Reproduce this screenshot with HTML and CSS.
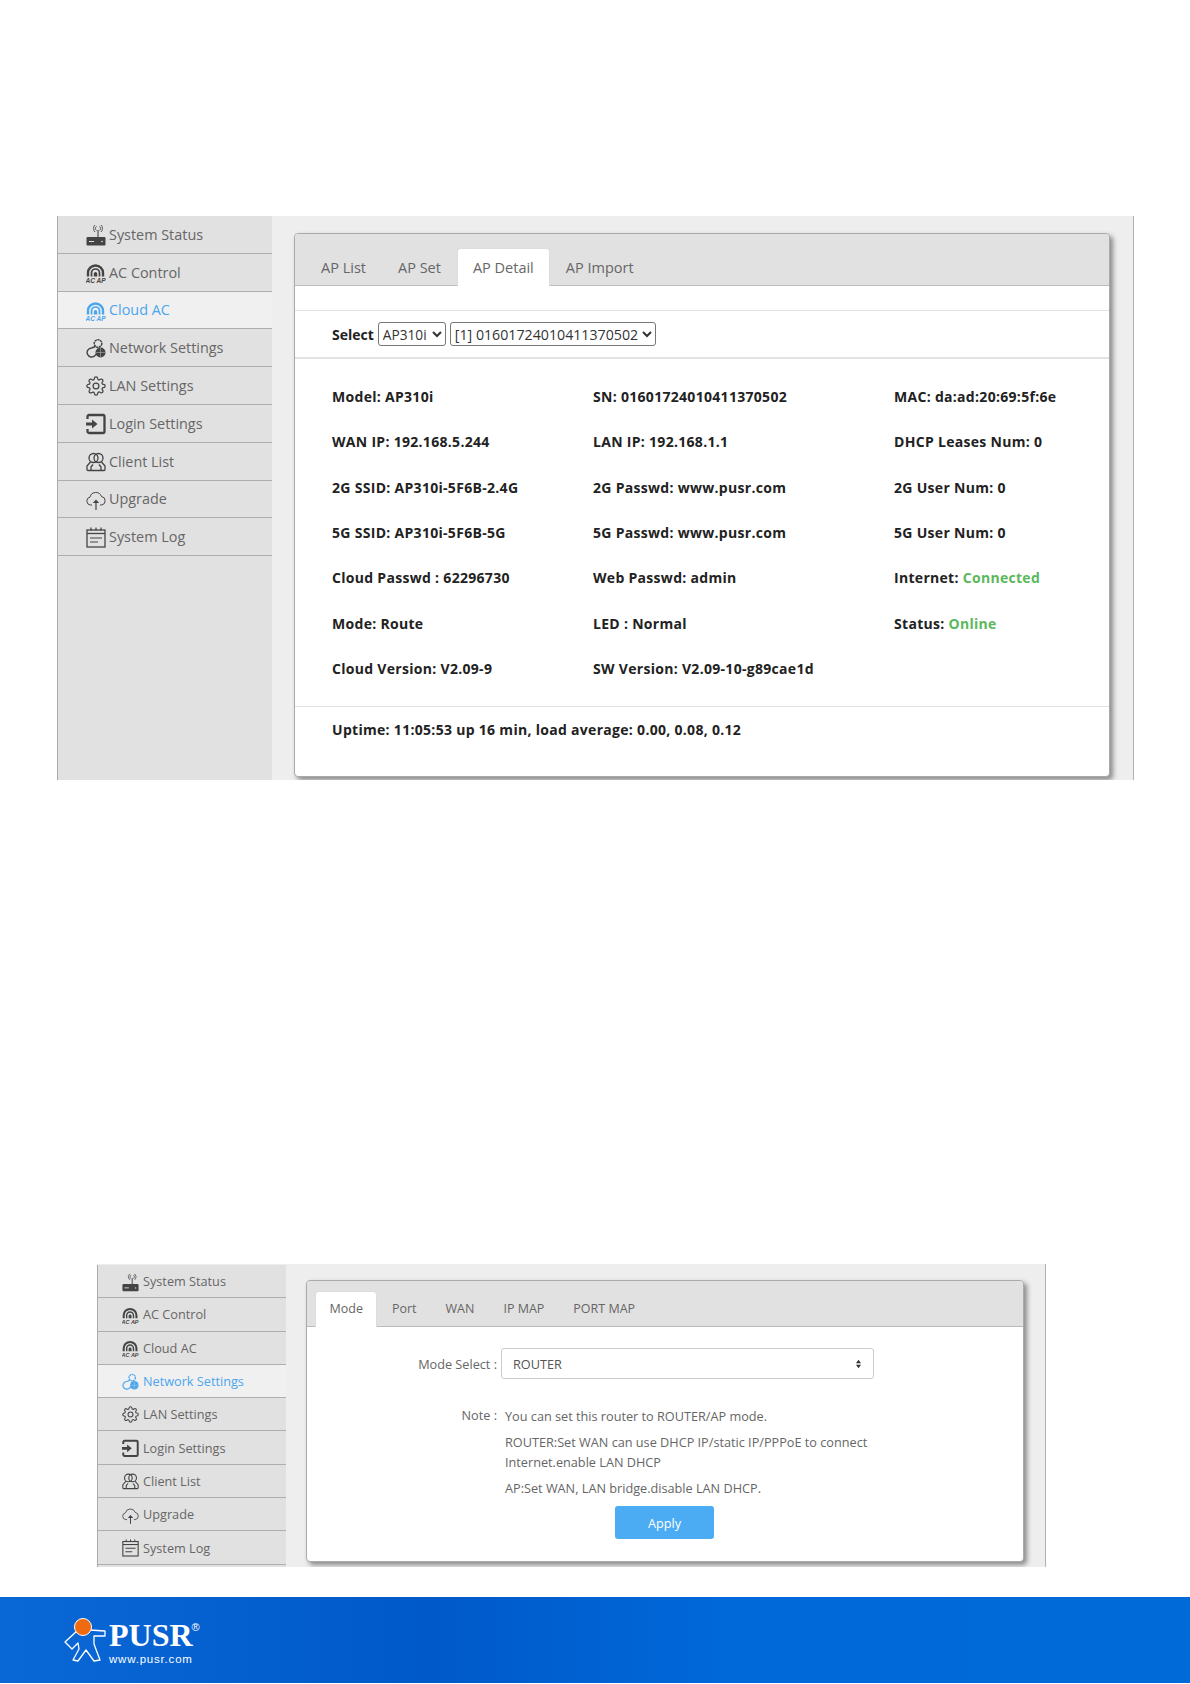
FILE: index.html
```html
<!DOCTYPE html>
<html lang="en">
<head>
<meta charset="utf-8">
<title>AP Detail and Network Settings</title>
<link rel="stylesheet" href="styles.css">
</head>
<body>
<svg class="defs" width="0" height="0" aria-hidden="true">
  <symbol id="i-router" viewBox="0 0 20 24">
    <rect x="0.5" y="15" width="19" height="8.500" rx="1.200" fill="currentColor"/>
    <rect x="3" y="19" width="5" height="1" fill="#e1e1e1"/>
    <circle cx="16" cy="19.500" r="0.800" fill="#e1e1e1"/>
    <path d="M12 15V8" stroke="currentColor" stroke-width="1.100" fill="none"/>
    <path d="M10.500 4.500a2.500 2.500 0 0 0 0 4M13.500 4.500a2.500 2.500 0 0 1 0 4M9 3a5 5 0 0 0 0 7M15 3a5 5 0 0 1 0 7" stroke="currentColor" stroke-width="0.900" fill="none"/>
  </symbol>
  <symbol id="i-ac" viewBox="0 0 20 24">
    <path d="M2 16.500V13a7.500 7.500 0 0 1 15 0v3.500" stroke="currentColor" stroke-width="2.400" fill="none"/>
    <path d="M5.500 16.500V13a4 4 0 0 1 8 0v3.500" stroke="currentColor" stroke-width="1.700" fill="none"/>
    <path d="M7.800 16.500v-2.800a1.700 1.700 0 0 1 3.400 0v2.800z" fill="currentColor"/>
  </symbol>
  <symbol id="i-net" viewBox="0 0 20 24">
    <circle cx="12" cy="7.500" r="3.800" stroke="currentColor" stroke-width="1.500" stroke-dasharray="2.200 0.600" fill="none"/>
    <path d="M9.500 10.500L5.500 12a4.500 4.500 0 1 0 3.500 7.500l3-3" stroke="currentColor" stroke-width="1.400" fill="none" stroke-linejoin="round"/>
    <circle cx="14.500" cy="16.500" r="5" fill="currentColor"/>
    <path d="M10 16.500h9M14.500 12v9" stroke="#e1e1e1" stroke-width="0.400"/>
  </symbol>
  <symbol id="i-gear" viewBox="0 0 20 24">
    <g transform="translate(0 2) scale(.833)" stroke="currentColor" stroke-width="1.500" fill="none">
      <circle cx="12" cy="12" r="3.500"/>
      <path d="M19.400 15a1.650 1.650 0 0 0 .33 1.820l.06.06a2 2 0 0 1 0 2.830 2 2 0 0 1-2.830 0l-.06-.06a1.650 1.650 0 0 0-1.820-.33 1.650 1.650 0 0 0-1 1.510V21a2 2 0 0 1-2 2 2 2 0 0 1-2-2v-.09A1.650 1.650 0 0 0 9 19.400a1.650 1.650 0 0 0-1.820.33l-.06.06a2 2 0 0 1-2.830 0 2 2 0 0 1 0-2.830l.06-.06a1.650 1.650 0 0 0 .33-1.820 1.650 1.650 0 0 0-1.510-1H3a2 2 0 0 1-2-2 2 2 0 0 1 2-2h.09A1.650 1.650 0 0 0 4.600 9a1.650 1.650 0 0 0-.33-1.820l-.06-.06a2 2 0 0 1 0-2.830 2 2 0 0 1 2.830 0l.06.06a1.650 1.650 0 0 0 1.820.33H9a1.650 1.650 0 0 0 1-1.510V3a2 2 0 0 1 2-2 2 2 0 0 1 2 2v.09a1.650 1.650 0 0 0 1 1.510 1.650 1.650 0 0 0 1.820-.33l.06-.06a2 2 0 0 1 2.830 0 2 2 0 0 1 0 2.830l-.06.06a1.650 1.650 0 0 0-.33 1.820V9a1.650 1.650 0 0 0 1.510 1H21a2 2 0 0 1 2 2 2 2 0 0 1-2 2h-.09a1.650 1.650 0 0 0-1.510 1z"/>
    </g>
  </symbol>
  <symbol id="i-login" viewBox="0 0 20 24">
    <path d="M1.500 8V5.500A1.500 1.500 0 0 1 3 4h14a1.500 1.500 0 0 1 1.500 1.500v15A1.500 1.500 0 0 1 17 22H3a1.500 1.500 0 0 1-1.500-1.500V18" stroke="currentColor" stroke-width="2.300" fill="none"/>
    <path d="M0 11.500h6V8.500l5.500 4.500L6 17.500v-3H0z" fill="currentColor"/>
  </symbol>
  <symbol id="i-users" viewBox="0 0 20 24">
    <circle cx="7.500" cy="9" r="4.500" stroke="currentColor" stroke-width="1.300" fill="none"/>
    <circle cx="12.500" cy="9" r="4.500" stroke="currentColor" stroke-width="1.300" fill="none"/>
    <path d="M4.500 13L1 17v3.500a1 1 0 0 0 1 1h5.500M15.500 13l3.500 4v3.500a1 1 0 0 1-1 1h-5.500M7 15.500l-2 2.500v3.500h10V18l-2-2.500" stroke="currentColor" stroke-width="1.300" fill="none" stroke-linejoin="round"/>
  </symbol>
  <symbol id="i-cloud" viewBox="0 0 20 24">
    <path d="M6 18H4.500a4 4 0 0 1-.5-7.900A6 6 0 0 1 15.500 9.500 4.300 4.300 0 0 1 15.500 18H14" stroke="currentColor" stroke-width="1" fill="none"/>
    <path d="M10 23V14" stroke="currentColor" stroke-width="1.200"/>
    <path d="M6.800 16l3.200-3.500 3.200 3.500z" fill="currentColor"/>
  </symbol>
  <symbol id="i-log" viewBox="0 0 20 24">
    <rect x="1" y="5" width="18" height="17" stroke="currentColor" stroke-width="1.300" fill="none"/>
    <path d="M1 8.500h18" stroke="currentColor" stroke-width="1.300"/>
    <path d="M5 2.500v3M10 2.500v3M15 2.500v3M4 13h12M4 17h8" stroke="currentColor" stroke-width="1.200"/>
  </symbol>
</svg>

<main class="page">
  <section class="panel panel-ap">
    <nav class="side">
      <a class="side-item"><svg class="ico"><use href="#i-router"/></svg>System Status</a>
      <a class="side-item"><svg class="ico" viewBox="0 0 20 24"><use href="#i-ac"/><text x="9.500" y="22.800" text-anchor="middle" class="ac-text">AC AP</text></svg>AC Control</a>
      <a class="side-item active"><svg class="ico" viewBox="0 0 20 24"><use href="#i-ac"/><text x="9.500" y="22.800" text-anchor="middle" class="ac-text">AC AP</text></svg>Cloud AC</a>
      <a class="side-item"><svg class="ico"><use href="#i-net"/></svg>Network Settings</a>
      <a class="side-item"><svg class="ico"><use href="#i-gear"/></svg>LAN Settings</a>
      <a class="side-item"><svg class="ico"><use href="#i-login"/></svg>Login Settings</a>
      <a class="side-item"><svg class="ico"><use href="#i-users"/></svg>Client List</a>
      <a class="side-item"><svg class="ico"><use href="#i-cloud"/></svg>Upgrade</a>
      <a class="side-item"><svg class="ico"><use href="#i-log"/></svg>System Log</a>
    </nav>
    <div class="card">
      <div class="tabs">
        <a class="tab">AP List</a>
        <a class="tab">AP Set</a>
        <a class="tab on">AP Detail</a>
        <a class="tab">AP Import</a>
      </div>
      <div class="select-row">
        <b class="select-label">Select</b>
        <select class="sel sel-model"><option>AP310i</option></select>
        <select class="sel sel-sn"><option>[1] 01601724010411370502</option></select>
      </div>
      <div class="details">
        <div>Model: AP310i</div><div>SN: 01601724010411370502</div><div>MAC: da:ad:20:69:5f:6e</div>
        <div>WAN IP: 192.168.5.244</div><div>LAN IP: 192.168.1.1</div><div>DHCP Leases Num: 0</div>
        <div>2G SSID: AP310i-5F6B-2.4G</div><div>2G Passwd: www.pusr.com</div><div>2G User Num: 0</div>
        <div>5G SSID: AP310i-5F6B-5G</div><div>5G Passwd: www.pusr.com</div><div>5G User Num: 0</div>
        <div>Cloud Passwd : 62296730</div><div>Web Passwd: admin</div><div>Internet: <span class="ok">Connected</span></div>
        <div>Mode: Route</div><div>LED : Normal</div><div>Status: <span class="ok">Online</span></div>
        <div>Cloud Version: V2.09-9</div><div>SW Version: V2.09-10-g89cae1d</div><div></div>
      </div>
      <div class="uptime">Uptime: 11:05:53 up 16 min, load average: 0.00, 0.08, 0.12</div>
    </div>
  </section>

  <section class="panel panel-net">
    <nav class="side">
      <a class="side-item"><svg class="ico"><use href="#i-router"/></svg>System Status</a>
      <a class="side-item"><svg class="ico" viewBox="0 0 20 24"><use href="#i-ac"/><text x="9.500" y="22.800" text-anchor="middle" class="ac-text">AC AP</text></svg>AC Control</a>
      <a class="side-item"><svg class="ico" viewBox="0 0 20 24"><use href="#i-ac"/><text x="9.500" y="22.800" text-anchor="middle" class="ac-text">AC AP</text></svg>Cloud AC</a>
      <a class="side-item active"><svg class="ico"><use href="#i-net"/></svg>Network Settings</a>
      <a class="side-item"><svg class="ico"><use href="#i-gear"/></svg>LAN Settings</a>
      <a class="side-item"><svg class="ico"><use href="#i-login"/></svg>Login Settings</a>
      <a class="side-item"><svg class="ico"><use href="#i-users"/></svg>Client List</a>
      <a class="side-item"><svg class="ico"><use href="#i-cloud"/></svg>Upgrade</a>
      <a class="side-item"><svg class="ico"><use href="#i-log"/></svg>System Log</a>
    </nav>
    <div class="card">
      <div class="tabs">
        <a class="tab on">Mode</a>
        <a class="tab">Port</a>
        <a class="tab">WAN</a>
        <a class="tab">IP MAP</a>
        <a class="tab">PORT MAP</a>
      </div>
      <div class="mode-row">
        <span class="mode-label">Mode Select :</span>
        <div class="mode-select">
          <span>ROUTER</span>
          <svg class="updown" viewBox="0 0 8 12"><path d="M4 1l3 4H1zM4 11L1 7h6z"/></svg>
        </div>
      </div>
      <div class="note">
        <span class="note-label">Note :</span>
        <div class="note-body">
          <p>You can set this router to ROUTER/AP mode.</p>
          <p>ROUTER:Set WAN can use DHCP IP/static IP/PPPoE to connect<br>Internet.enable LAN DHCP</p>
          <p>AP:Set WAN, LAN bridge.disable LAN DHCP.</p>
        </div>
      </div>
      <div class="apply-row"><button class="apply" type="button">Apply</button></div>
    </div>
  </section>
</main>

<footer class="footer">
  <svg class="mascot" viewBox="0 0 42 48">
    <path d="M14 14L1 26l7 7 6-6 1 6-6 11 5 1 8-11 8 11 6-1-6-16v-8h11v-5l-15-1z" fill="#0a66d4" stroke="#fff" stroke-width="1.300" stroke-linejoin="round"/>
    <circle cx="19" cy="11" r="8.500" fill="#f06a12" stroke="#fff" stroke-width="1"/>
  </svg>
  <div class="brand">
    <div class="brand-name">PUSR<sup class="brand-reg">®</sup></div>
    <div class="brand-url">www.pusr.com</div>
  </div>
</footer>
</body>
</html>
```
FILE: styles.css
```css
* { box-sizing: border-box; }
html, body { margin: 0; padding: 0; }
body {
  width: 1190px;
  height: 1684px;
  overflow: hidden;
  background: #fff;
  font-family: "Open Sans", "Noto Sans", sans-serif;
  color: #666;
}
.defs { display: block; height: 0; }
.ac-text { font: italic 700 6.500px "Liberation Sans", sans-serif; fill: currentColor; }
.page { padding-top: 216px; }

.panel {
  display: flex;
  background: #eee;
  overflow: hidden;
  border-right: 1px solid #b0b0b0;
}
.panel-ap { margin-left: 57px; width: 1077px; height: 564px; }
.panel-net { margin: 484px 0 0 97px; width: 949px; height: 303px; padding-top: 1px; }

.side {
  flex: none;
  background: #e1e1e1;
  border-left: 1px solid #aaa;
}
.panel-ap .side { width: 215px; }
.panel-net .side { width: 189px; }
.side-item {
  display: flex;
  align-items: center;
  border-bottom: 1px solid #aeaeae;
  color: #666;
}
.panel-ap .side-item { height: 37.800px; padding-left: 28px; font-size: 14.400px; gap: 3px; }
.panel-net .side-item { height: 33.300px; padding-left: 24px; font-size: 12.700px; gap: 4px; }
.side-item.active { background: #f0f0f0; color: #4ba6ee; }
.ico { flex: none; color: #444; }
.active .ico { color: #4ba6ee; }
.panel-ap .ico { width: 20px; height: 24px; }
.panel-net .ico { width: 17px; height: 21px; }

.card {
  flex: none;
  background: #fff;
  border: 1px solid #aaa;
  border-radius: 4px;
  box-shadow: 3px 3px 5px #8a8a8a;
}
.panel-ap .card { width: 816px; height: 544px; margin: 17px 0 0 22px; font-size: 14px; }
.panel-net .card { width: 718px; height: 282px; margin: 15px 0 0 20px; font-size: 12.700px; }

.tabs {
  display: flex;
  align-items: flex-end;
  background: #e1e1e1;
  border-bottom: 1px solid #bbb;
  border-radius: 4px 4px 0 0;
}
.panel-ap .tabs { height: 52px; padding-left: 10px; font-size: 14.500px; }
.panel-net .tabs { height: 46px; padding-left: 8px; font-size: 12.500px; }
.tab {
  display: flex;
  align-items: center;
  justify-content: center;
  color: #666;
  border-radius: 4px 4px 0 0;
  margin-bottom: -1px;
  border: 1px solid transparent;
  border-bottom: 0;
}
.panel-ap .tab { height: 38px; padding: 0 15px 1px; }
.panel-net .tab { height: 36px; padding: 0 13.500px 2px; }
.tab.on { background: #fff; border-color: #ddd; color: #666; }

.select-row {
  display: flex;
  align-items: center;
  gap: 4px;
  margin-top: 24px;
  height: 49px;
  padding-left: 37px;
  border-top: 1px solid #e2e2e2;
  border-bottom: 2px solid #e2e2e2;
  color: #222;
}
.select-label { font-weight: 700; }
.sel {
  height: 24px;
  padding: 0;
  background: #fff;
  border: 1px solid #767676;
  border-radius: 3px;
  color: #333;
  font: 14.200px "Open Sans", sans-serif;
}
.sel-model { width: 68px; font-size: 13.700px; }
.sel-sn { width: 206px; }

.details {
  display: grid;
  grid-template-columns: 261px 301px 1fr;
  grid-auto-rows: 45.300px;
  align-items: center;
  padding: 15px 0 0 37px;
  height: 348px;
  border-bottom: 1px solid #e2e2e2;
  color: #222;
  font-weight: 700;
  letter-spacing: 0.300px;
}
.ok { color: #5cb85c; }
.uptime { padding: 13px 0 0 37px; color: #222; font-weight: 700; letter-spacing: 0.300px; }

.mode-row { display: flex; align-items: center; margin-top: 21px; }
.mode-label { width: 190px; text-align: right; }
.mode-select {
  display: flex;
  align-items: center;
  justify-content: space-between;
  width: 373px;
  height: 31px;
  margin-left: 4px;
  padding: 0 11px;
  background: #fff;
  border: 1px solid #ccc;
  border-radius: 3px;
  color: #555;
}
.updown { width: 7px; height: 10px; fill: #333; }

.note { display: flex; margin-top: 27px; }
.note-label { width: 190px; text-align: right; }
.note-body { margin-left: 8px; }
.note-body p { margin: 0 0 6px; line-height: 20px; width: 370px; }
.note-body p:last-child { margin-bottom: 8px; }
.apply-row { display: flex; margin: 0 0 0 308px; }
.apply {
  width: 99px;
  height: 33px;
  background: #4cacf3;
  border: 0;
  border-radius: 3px;
  color: #fff;
  font: 12.700px "Open Sans", sans-serif;
}

.footer {
  display: flex;
  align-items: flex-start;
  margin-top: 30px;
  height: 86px;
  padding: 19px 0 0 64px;
  background: linear-gradient(90deg, #0a68d6 0, #0059c9 36%, #0069da 62%, #006ad8 100%);
  color: #fff;
}
.mascot { flex: none; width: 42px; height: 48px; }
.brand { margin-left: 3px; }
.brand-name {
  display: flex;
  align-items: flex-start;
  font: 700 32px/34px "Liberation Serif", serif;
  margin-top: 2px;
}
.brand-reg { font: 400 11px/12px "Liberation Sans", sans-serif; margin: 3px 0 0 -1px; }
.brand-url { font: 400 11.500px/14px "Liberation Sans", sans-serif; letter-spacing: 0.800px; }
```
